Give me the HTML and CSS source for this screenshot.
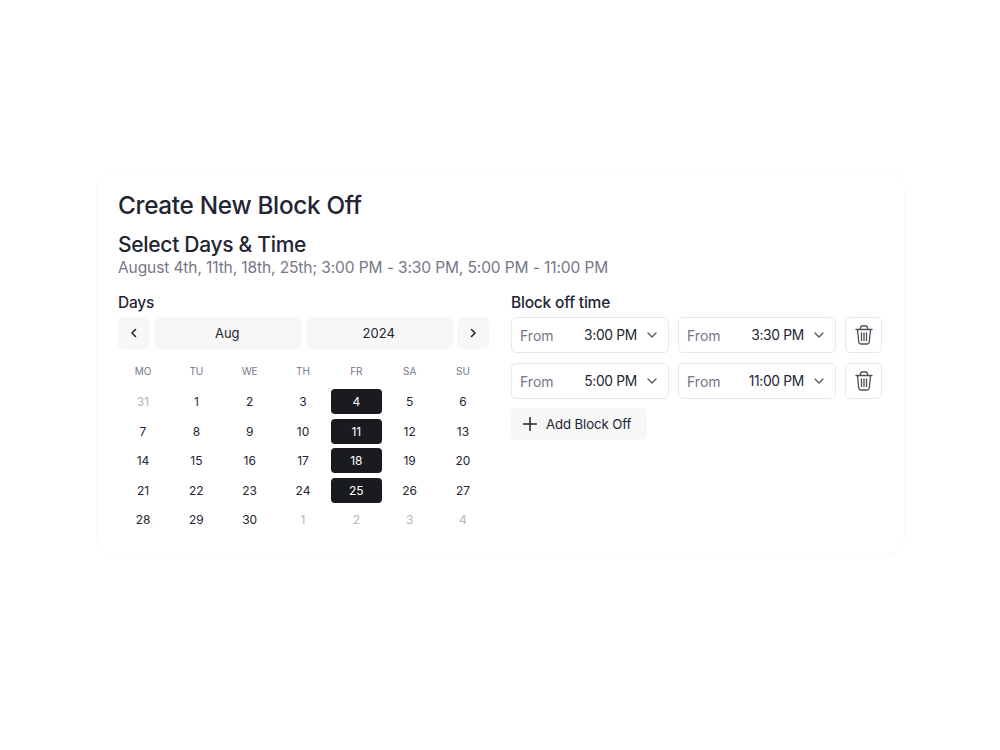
FILE: index.html
```html
<!DOCTYPE html>
<html lang="en">
<head>
  <meta charset="UTF-8" />
  <meta name="viewport" content="width=device-width, initial-scale=1.0" />
  <title>Create New Block Off</title>
  <link rel="stylesheet" href="styles.css">
</head>
<body>
  <div class="card">
    <h1 class="title">Create New Block Off</h1>
    <h2 class="subtitle">Select Days &amp; Time</h2>
    <p class="summary">August 4th, 11th, 18th, 25th; 3:00 PM - 3:30 PM, 5:00 PM - 11:00 PM</p>

    <div class="columns">
      <div class="days">
        <div class="label">Days</div>
        <div class="month-nav">
          <button class="nav-btn arrow">
            <svg width="12" height="12" viewBox="0 0 12 12"><path d="M7.5 2.5 4 6l3.5 3.5" /></svg>
          </button>
          <button class="nav-btn wide">Aug</button>
          <button class="nav-btn wide">2024</button>
          <button class="nav-btn arrow">
            <svg width="12" height="12" viewBox="0 0 12 12"><path d="M4.5 2.5 8 6 4.5 9.5" /></svg>
          </button>
        </div>
        <div class="weekdays">
          <span>MO</span><span>TU</span><span>WE</span><span>TH</span><span>FR</span><span>SA</span><span>SU</span>
        </div>
        <div class="dates">
          <span class="date muted">31</span><span class="date">1</span><span class="date">2</span><span class="date">3</span><span class="date picked">4</span><span class="date">5</span><span class="date">6</span>
          <span class="date">7</span><span class="date">8</span><span class="date">9</span><span class="date">10</span><span class="date picked">11</span><span class="date">12</span><span class="date">13</span>
          <span class="date">14</span><span class="date">15</span><span class="date">16</span><span class="date">17</span><span class="date picked">18</span><span class="date">19</span><span class="date">20</span>
          <span class="date">21</span><span class="date">22</span><span class="date">23</span><span class="date">24</span><span class="date picked">25</span><span class="date">26</span><span class="date">27</span>
          <span class="date">28</span><span class="date">29</span><span class="date">30</span><span class="date muted">1</span><span class="date muted">2</span><span class="date muted">3</span><span class="date muted">4</span>
        </div>
      </div>

      <div class="times">
        <div class="label">Block off time</div>
        <div class="time-row">
          <div class="select"><span class="from">From</span><span class="value">3:00 PM</span><svg class="chev" width="12" height="12" viewBox="0 0 12 12"><path d="M2 4l4 4 4-4" /></svg></div>
          <div class="select"><span class="from">From</span><span class="value">3:30 PM</span><svg class="chev" width="12" height="12" viewBox="0 0 12 12"><path d="M2 4l4 4 4-4" /></svg></div>
          <button class="trash">
            <svg width="18" height="20" viewBox="0 0 18 20"><path d="M1 4.500h16M2.500 4.500l1.200 12.500q.2 2 2 2h6.600q1.800 0 2-2l1.200-12.500M5 4.500 5.800 2q.3-1 1.200-1h4q.9 0 1.200 1l.8 2.500M6.500 8v7.500M9 8v7.500M11.500 8v7.500" /></svg>
          </button>
        </div>
        <div class="time-row">
          <div class="select"><span class="from">From</span><span class="value">5:00 PM</span><svg class="chev" width="12" height="12" viewBox="0 0 12 12"><path d="M2 4l4 4 4-4" /></svg></div>
          <div class="select"><span class="from">From</span><span class="value">11:00 PM</span><svg class="chev" width="12" height="12" viewBox="0 0 12 12"><path d="M2 4l4 4 4-4" /></svg></div>
          <button class="trash">
            <svg width="18" height="20" viewBox="0 0 18 20"><path d="M1 4.500h16M2.500 4.500l1.200 12.500q.2 2 2 2h6.600q1.800 0 2-2l1.200-12.500M5 4.500 5.800 2q.3-1 1.200-1h4q.9 0 1.200 1l.8 2.500M6.500 8v7.500M9 8v7.500M11.500 8v7.500" /></svg>
          </button>
        </div>
        <button class="add-btn">
          <svg width="14" height="14" viewBox="0 0 14 14"><path d="M7 .5v13M.5 7h13" /></svg>
          Add Block Off
        </button>
      </div>
    </div>
  </div>
</body>
</html>
```

FILE: styles.css
```css
* {
  box-sizing: border-box;
}

body {
  margin: 0;
  height: 750px;
  background-color: #fff;
  font-family: Inter, "Liberation Sans", sans-serif;
  color: #232532;
}

button {
  font-family: inherit;
  border: none;
  cursor: pointer;
}

svg path {
  fill: none;
  stroke: currentColor;
  stroke-linecap: round;
  stroke-linejoin: round;
}

.card {
  position: relative;
  top: 172px;
  width: 809px;
  height: 382px;
  margin-left: 96px;
  padding: 16px 21px;
  border: 1px solid #fafafb;
  border-radius: 16px;
}

.title {
  margin: 0;
  font-size: 24.300px;
  line-height: 32px;
  font-weight: 500;
  letter-spacing: -0.3px;
}

.subtitle {
  margin: 11px 0 0;
  font-size: 21px;
  line-height: 26px;
  font-weight: 500;
  letter-spacing: -0.3px;
}

.summary {
  margin: 0;
  font-size: 15.500px;
  line-height: 20px;
  color: #767787;
  letter-spacing: -0.1px;
}

.columns {
  display: grid;
  grid-template-columns: 371px 371px;
  gap: 22px;
  margin-top: 15px;
}

.label {
  font-size: 15.500px;
  line-height: 20px;
  font-weight: 500;
  letter-spacing: -0.2px;
  margin-bottom: 4px;
}

.month-nav {
  display: flex;
  gap: 4px;
  height: 32px;
}

.nav-btn {
  height: 32px;
  padding: 0;
  display: flex;
  align-items: center;
  justify-content: center;
  background-color: #f7f7f7;
  border-radius: 5px;
  font-size: 13px;
  color: #232532;
}

.arrow {
  width: 32px;
}

.arrow path {
  stroke-width: 1.6;
}

.wide {
  flex: 1;
  padding-right: 1px;
}

.weekdays,
.dates {
  display: grid;
  grid-template-columns: repeat(7, 1fr);
  column-gap: 2.300px;
}

.weekdays {
  margin-top: 15px;
  height: 14px;
  font-size: 10px;
  line-height: 14px;
  color: #767787;
  text-align: center;
}

.weekdays span {
  padding-right: 1px;
}

.dates {
  margin-top: 11px;
  grid-auto-rows: 25px;
  row-gap: 4.600px;
}

.date {
  display: flex;
  align-items: center;
  justify-content: center;
  padding-right: 1px;
  font-size: 12px;
  color: #232532;
  border-radius: 4px;
}

.muted {
  color: #b4b5c0;
}

.picked {
  background-color: #1a1b1f;
  color: #fff;
}

.time-row {
  display: flex;
  gap: 9px;
  margin-bottom: 10px;
}

.select {
  width: 158px;
  height: 36px;
  padding: 0 10px 0 8px;
  display: flex;
  align-items: center;
  border: 1px solid #e9e9ed;
  border-radius: 5px;
  font-size: 14px;
}

.from {
  color: #767787;
}

.value {
  margin-left: auto;
  font-size: 13.800px;
  letter-spacing: -0.3px;
}

.chev {
  margin-left: 9px;
  color: #50515c;
}

.chev path {
  stroke-width: 1.2;
}

.trash {
  width: 37px;
  height: 36px;
  padding: 0;
  display: flex;
  align-items: center;
  justify-content: center;
  background-color: #fff;
  border: 1px solid #e9e9ed;
  border-radius: 5px;
  color: #50515c;
}

.trash path {
  stroke-width: 1.3;
}

.add-btn {
  width: 136px;
  height: 32px;
  margin-top: -1px;
  padding: 0 0 0 12px;
  display: flex;
  align-items: center;
  gap: 9px;
  background-color: #f7f7f7;
  border-radius: 5px;
  font-size: 13.200px;
  color: #232532;
  letter-spacing: -0.1px;
}

.add-btn path {
  stroke-width: 1.5;
}
```
